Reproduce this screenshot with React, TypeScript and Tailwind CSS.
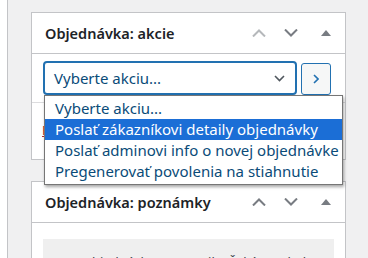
import React from "react";

const font = { fontFamily: '"Noto Sans", "Open Sans", sans-serif' };

function Up({ color }: { color: string }) {
  return (
    <svg width="14" height="8" viewBox="0 0 14 8">
      <polyline points="1,7.5 7,1.5 13,7.5" fill="none" stroke={color} strokeWidth="2" />
    </svg>
  );
}
function Down({ color }: { color: string }) {
  return (
    <svg width="14" height="8" viewBox="0 0 14 8">
      <polyline points="1,0.5 7,6.5 13,0.5" fill="none" stroke={color} strokeWidth="2" />
    </svg>
  );
}
function Tri() {
  return (
    <svg width="10" height="6" viewBox="0 0 10 6">
      <polygon points="0,6 5,0 10,6" fill="#787c82" />
    </svg>
  );
}

function Header({ title, upColor }: { title: string; upColor: string }) {
  return (
    <div className="h-[41px] border-b border-[#c3c4c7] flex items-center">
      <div className="pl-[13px] flex-1 text-[14.5px] font-semibold text-[#1d2327] leading-none pt-[1px]">{title}</div>
      <div className="flex items-center">
        <div className="w-[30px] flex justify-center"><Up color={upColor} /></div>
        <div className="w-[33px] flex justify-center"><Down color="#787c82" /></div>
        <div className="w-[38px] flex justify-center"><Tri /></div>
      </div>
    </div>
  );
}

export default function App() {
  const options = [
    "Vyberte akciu...",
    "Poslať zákazníkovi detaily objednávky",
    "Poslať adminovi info o novej objednávke",
    "Pregenerovať povolenia na stiahnutie",
  ];
  return (
    <div className="w-[368px] h-[258px] bg-[#f0f0f1] flex overflow-hidden relative" style={font}>
      <div className="w-[8px] h-full bg-white border-r border-[#c3c4c7] shrink-0" />
      <div className="ml-[23px] w-[315px] pt-[12px] shrink-0 flex flex-col">
        <div className="bg-white border border-[#c3c4c7]">
          <Header title="Objednávka: akcie" upColor="#b5b8bb" />
          <div className="h-[49px] border-b border-[#dcdcde] flex items-start pt-[7px] pl-[11px] gap-[4px]">
            <div className="w-[254px] h-[34px] border-2 border-[#2271b1] rounded-[4px] flex items-center pl-[9px] pr-[10px]">
              <span className="flex-1 text-[15px] text-[#0a4b78]">Vyberte akciu...</span>
              <svg width="11" height="7" viewBox="0 0 11 7">
                <polyline points="1,1 5.5,5.5 10,1" fill="none" stroke="#50575e" strokeWidth="1.6" />
              </svg>
            </div>
            <div className="mt-[2px] w-[30px] h-[32px] border border-[#2271b1] rounded-[3px] bg-[#f6f7f7] flex items-center justify-center">
              <svg width="6" height="10" viewBox="0 0 6 10">
                <polyline points="1,1 5,5 1,9" fill="none" stroke="#2271b1" strokeWidth="1.6" />
              </svg>
            </div>
          </div>
          <div className="h-[56px] flex items-center pl-[10px]">
            <span className="text-[13px] text-[#b32d2e] underline">Presunúť do koša</span>
          </div>
        </div>
        <div className="mt-[21px] bg-white border border-[#c3c4c7] flex-1">
          <Header title="Objednávka: poznámky" upColor="#787c82" />
          <div className="pt-[16px] px-[11px]">
            <div className="bg-[#efefef] px-[12px] pt-[13px] pb-[10px] text-[13px] leading-[20px] text-[#3c434a]">
              Stav objednávky sa zmenil z Čaká na platbu na Spracováva sa.
            </div>
          </div>
        </div>
      </div>
      <div className="absolute left-[44px] top-[95px] w-[299px] h-[90px] bg-white border border-[#767676] shadow-[1px_2px_3px_rgba(0,0,0,0.35)] py-[2px]">
        {options.map((o, i) => (
          <div
            key={o}
            className={
              "h-[21px] flex items-center pl-[10px] text-[15px] whitespace-nowrap " +
              (i === 1 ? "bg-[#1b6ed6] text-white" : "text-[#0a4b78]")
            }
          >
            {o}
          </div>
        ))}
      </div>
    </div>
  );
}
